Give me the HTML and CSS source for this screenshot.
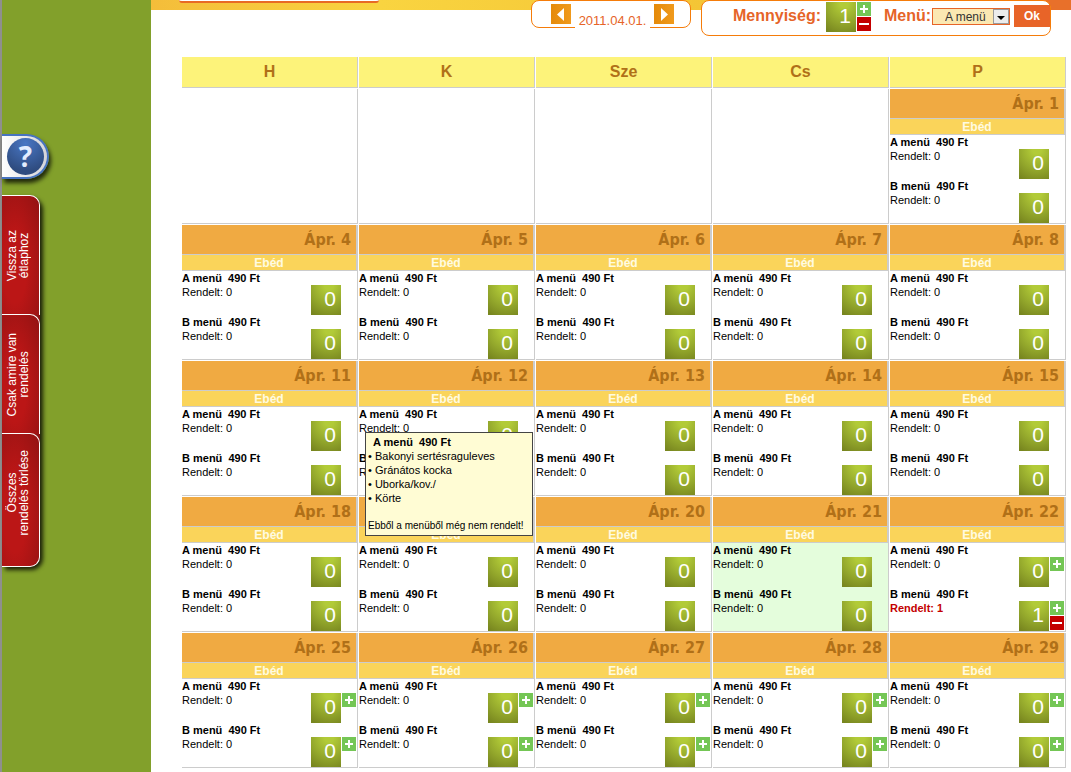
FILE: index.html
```
<!DOCTYPE html>
<html lang="hu">
<head>
<meta charset="utf-8">
<title>Menü rendelés</title>
<link rel="stylesheet" href="styles.css">
</head>
<body>
<aside class="sidebar">
  <button class="help" type="button" aria-label="Súgó"><span class="help-disc">?</span></button>
  <nav class="tabs">
    <button class="tab" type="button"><span class="tab-text">Vissza az<br>étlaphoz</span></button>
    <button class="tab" type="button"><span class="tab-text">Csak amire van<br>rendelés</span></button>
    <button class="tab tab-last" type="button"><span class="tab-text">Összes<br>rendelés törlése</span></button>
  </nav>
</aside>
<main class="main">
  <header class="topbar">
    <div class="banner-box"></div>
    <div class="date-box">
      <button class="arrow" type="button" aria-label="Előző"><svg viewBox="0 0 20 20" width="20" height="20"><path d="M13 4v13L6 10.5z" fill="#fff"/></svg></button>
      <span class="date">2011.04.01.</span>
      <button class="arrow" type="button" aria-label="Következő"><svg viewBox="0 0 20 20" width="20" height="20"><path d="M7 4v13l7-6.5z" fill="#fff"/></svg></button>
    </div>
    <form class="order-box">
      <span class="label">Mennyiség:</span>
      <span class="qty"><output class="count">1</output><span class="steps"><button class="step plus" type="button" aria-label="Több"></button><button class="step minus" type="button" aria-label="Kevesebb"></button></span></span>
      <label class="label menu-label" for="menu">Menü:</label>
      <span class="select-wrap">
        <select id="menu"><option>A menü</option><option>B menü</option></select>
        <svg class="drop" viewBox="0 0 16 15" width="16" height="15"><rect x=".5" y=".5" width="15" height="14" fill="#ececec" stroke="#9a9a9a"/><path d="M4 7h8l-4 4z" fill="#000"/></svg>
      </span>
      <button class="ok" type="button">Ok</button>
    </form>
  </header>
  <table class="calendar">
    <thead><tr><th>H</th><th>K</th><th>Sze</th><th>Cs</th><th>P</th></tr></thead>
    <tbody id="days"></tbody>
  </table>
</main>
<script src="calendar.js"></script>
</body>
</html>
```
FILE: styles.css
```
* { box-sizing: border-box; }

body {
  margin: 0;
  display: flex;
  min-height: 100vh;
  background: #fff;
  font: 11px/14px "Liberation Sans", Arial, sans-serif;
  color: #000;
}

button {
  font: inherit;
  border: 0;
  padding: 0;
  cursor: pointer;
}

svg { display: block; }

.sidebar {
  flex: none;
  width: 151px;
  padding-top: 134px;
  background: #82a02b;
  border-left: 2px solid #8f8f8f;
}

.help {
  display: flex;
  align-items: center;
  justify-content: flex-end;
  width: 47px;
  height: 45px;
  padding-right: 3px;
  border: 2px solid #4773c0;
  border-left: 0;
  border-radius: 0 23px 23px 0;
  background: linear-gradient(to right, #fff, #d4d4d8);
  box-shadow: 2px 4px 4px rgba(0, 0, 0, .75);
}

.help-disc {
  width: 37px;
  height: 37px;
  border-radius: 50%;
  background: radial-gradient(circle at 50% 15%, #4876c4, #2f4c80 75%);
  color: #e2ecff;
  font: bold 28px/36px "Open Sans", sans-serif;
  text-align: center;
}

.tabs {
  display: flex;
  flex-direction: column;
  width: 38px;
  margin-top: 16px;
  border-radius: 0 12px 12px 0;
  background: #8f1414;
  box-shadow: 3px 3px 4px rgba(0, 0, 0, .8);
}

.tab {
  display: flex;
  align-items: center;
  height: 120px;
  padding-left: 4px;
  border: 1px solid #fff;
  border-left: 0;
  border-bottom: 0;
  border-radius: 0 10px 0 0;
  background: radial-gradient(ellipse at 35% 60%, #bb1616 35%, #8c1212 110%);
  color: #fff;
  font-size: 12px;
  line-height: 12px;
}

.tab + .tab { margin-top: -1px; }

.tab-last {
  height: 134px;
  padding-bottom: 14px;
  border-bottom: 1px solid #fff;
  border-radius: 0 10px 10px 0;
}

.tab-text {
  writing-mode: vertical-rl;
  transform: rotate(180deg);
  white-space: nowrap;
  text-align: center;
}

.main {
  flex: 1;
  min-width: 0;
}

.topbar {
  display: flex;
  align-items: flex-start;
  height: 56px;
  padding: 0 20px 0 28px;
  background: linear-gradient(to right, #f4bd3a, #f9d440 25%, #f4c535 60%, #ef9a30 85%, #e8702a 97%) no-repeat 0 0 / 100% 10px;
}

.banner-box {
  width: 200px;
  height: 3px;
  border-bottom: 2px solid #e86a24;
  border-radius: 0 0 14px 14px;
  background: #fff;
}

.date-box {
  display: flex;
  justify-content: space-between;
  width: 160px;
  height: 28px;
  margin-left: auto;
  padding: 3px 16px 0 19px;
  border: 1px solid #f57c0a;
  border-radius: 8px;
  background: #fff;
}

.arrow {
  width: 20px;
  height: 20px;
  background: linear-gradient(to right, #e58a0a, #f09a1c);
}

.date {
  height: 26px;
  padding: 9px 4px 0;
  background: #fff;
  color: #e66428;
  font-size: 13px;
  line-height: 16px;
}

.order-box {
  display: flex;
  width: 350px;
  height: 36px;
  margin-left: 10px;
  padding: 1px 0 0 31px;
  border: 1px solid #f57c0a;
  border-radius: 8px;
  background: #fff;
}

.label {
  width: 93px;
  color: #e66428;
  font-size: 16px;
  font-weight: bold;
  line-height: 28px;
}

.menu-label {
  width: 48px;
  margin-left: 13px;
}

.select-wrap {
  position: relative;
  flex: 1;
  height: 17px;
  margin-top: 6px;
}

.select-wrap select {
  display: block;
  width: 100%;
  height: 100%;
  padding: 1px 0 0 12px;
  appearance: none;
  border: 1px solid #e66428;
  border-radius: 0;
  background: #fbe8b2;
  color: #333;
  font: 12px/14px "Liberation Sans", Arial, sans-serif;
}

.drop {
  position: absolute;
  top: 1px;
  right: 1px;
  pointer-events: none;
}

.ok {
  width: 36px;
  height: 22px;
  margin: 3px 0 0 4px;
  background: #e86428;
  color: #fff;
  font-size: 12px;
  font-weight: bold;
}

.qty {
  display: flex;
  gap: 1px;
}

.count {
  width: 30px;
  height: 30px;
  padding-right: 5px;
  background: radial-gradient(ellipse 30px 34px at 60% 0, #b2cb38 15%, #94a82c 60%, #78861f);
  color: #fff;
  font-size: 21px;
  line-height: 28px;
  text-align: right;
}

.steps {
  display: flex;
  flex-direction: column;
  gap: 1px;
  width: 14px;
}

.step {
  width: 14px;
  height: 14px;
  background-repeat: no-repeat;
  background-position: center;
}

.plus {
  background-color: #74c655;
  background-image: linear-gradient(#fff, #fff), linear-gradient(#fff, #fff);
  background-size: 8px 2px, 2px 8px;
}

.minus {
  background-color: #c40000;
  background-image: linear-gradient(#fff, #fff);
  background-size: 10px 2px;
}

.calendar {
  width: calc(100% - 34px);
  margin-left: 30px;
  table-layout: fixed;
  border-collapse: separate;
  border-spacing: 1px;
}

.calendar th {
  height: 31px;
  padding: 0;
  border-right: 1px solid #ccc;
  border-bottom: 1px solid #ccc;
  background: #fdf37a;
  color: #b07018;
  font-size: 16px;
  line-height: 18px;
}

.calendar td {
  position: relative;
  height: 135px;
  padding: 0;
  vertical-align: top;
  border-right: 1px solid #ccc;
  border-bottom: 1px solid #ccc;
}

.day-name,
.meal-name {
  border-right: 1px solid #ccc;
  border-bottom: 1px solid #ccc;
}

.day-name {
  height: 30px;
  padding-right: 5px;
  background: #f0aa42;
  color: #b07018;
  font: bold 16px/30px "DejaVu Sans Condensed", "DejaVu Sans", sans-serif;
  text-align: right;
}

.meal-name {
  height: 16px;
  background: #fad45a;
  color: #fffbe0;
  font-size: 12px;
  font-weight: bold;
  line-height: 16px;
  text-align: center;
}

.item {
  display: flex;
  justify-content: space-between;
  height: 44px;
}

.item .qty {
  width: 46px;
  height: 30px;
  margin-top: 14px;
}

.item-text { white-space: pre; }

.item-title { font-weight: bold; }

.ordered {
  color: #c40000;
  font-weight: bold;
}

.selected { background: #e4fddc; }

.tip {
  position: absolute;
  z-index: 2;
  top: 71px;
  left: 6px;
  min-width: 168px;
  padding: 2px;
  border: 1px solid #444;
  background: #fffcd4;
  white-space: pre;
}

.tip-title {
  padding-left: 5px;
  font-weight: bold;
}

.tip ul {
  margin: 0 0 14px;
  padding: 0;
  list-style: none;
}

.tip li::before { content: "• "; }

.tip-note { font-size: 10px; }
```
FILE: calendar.js
```
const tip = `<div class="tip" role="tooltip"><div class="tip-title">A menü  490 Ft</div><ul><li>Bakonyi sertésraguleves</li><li>Gránátos kocka</li><li>Uborka/kov./</li><li>Körte</li></ul><div class="tip-note">Ebből a menüből még nem rendelt!</div></div>`;

function item(name, count, canAdd) {
  const plus = canAdd ? '<button class="step plus" type="button" aria-label="Több"></button>' : '';
  const minus = count > 0 ? '<button class="step minus" type="button" aria-label="Kevesebb"></button>' : '';
  return `<div class="item"><div class="item-text"><div class="item-title">${name} menü  490 Ft</div><div class="${count ? 'ordered' : ''}">Rendelt: ${count}</div></div>` +
    `<div class="qty"><output class="count">${count}</output><span class="steps">${plus}${minus}</span></div></div>`;
}

function day(n) {
  if (n < 1) return '<td></td>';
  const open = n >= 22;
  return `<td><div class="day-name">Ápr. ${n}</div><div class="meal-name">Ebéd</div>` +
    `<div class="${n === 21 ? 'selected' : ''}">${item('A', 0, open)}${item('B', n === 22 ? 1 : 0, open)}</div>${n === 12 ? tip : ''}</td>`;
}

let rows = '';
for (let monday = -3; monday <= 25; monday += 7) {
  rows += '<tr>' + [0, 1, 2, 3, 4].map(i => day(monday + i)).join('') + '</tr>';
}
document.getElementById('days').innerHTML = rows;
```
